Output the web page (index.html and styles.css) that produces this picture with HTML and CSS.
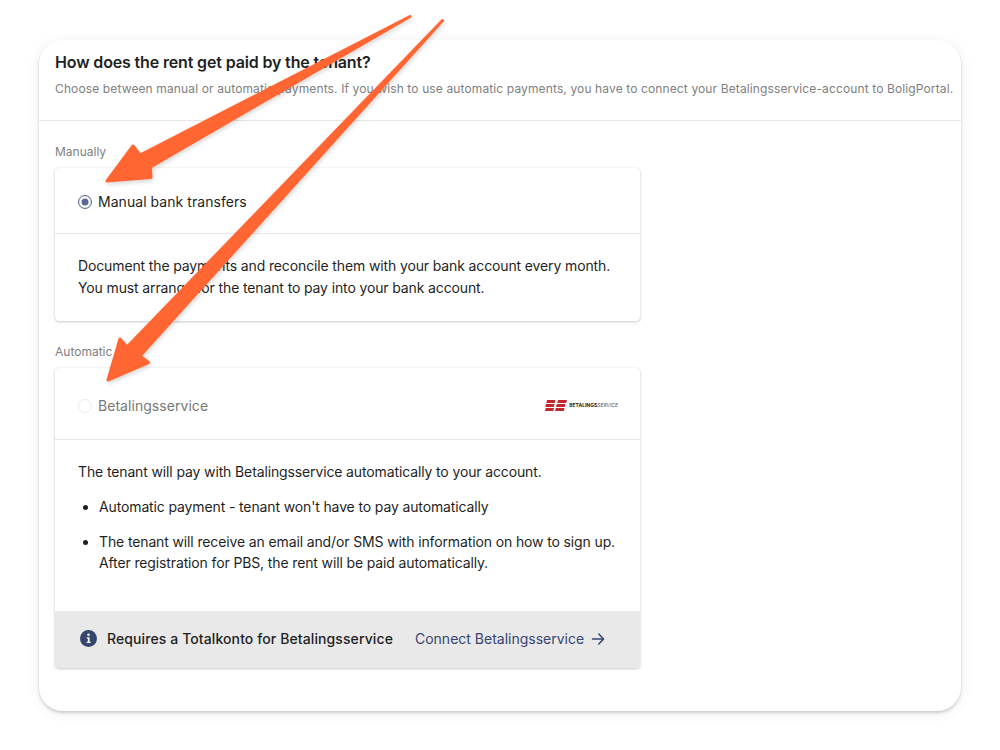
FILE: index.html
```html
<!DOCTYPE html>
<html lang="en">

<head>
  <meta charset="UTF-8">
  <title>Rent payment</title>
  <link rel="stylesheet" href="styles.css">
</head>

<body>
  <div class="panel">
    <div class="panel-head">
      <h1>How does the rent get paid by the tenant?</h1>
      <p>Choose between manual or automatic payments. If you wish to use automatic payments, you have to connect your Betalingsservice-account to BoligPortal.</p>
    </div>

    <div class="panel-body">
      <div class="group-label">Manually</div>
      <div class="option">
        <div class="option-head option-head-short">
          <span class="radio radio-on"></span>
          <span class="option-name">Manual bank transfers</span>
        </div>
        <div class="option-text option-text-short">
          <p>Document the payments and reconcile them with your bank account every month. You must arrange for the tenant to pay into your bank account.</p>
        </div>
      </div>

      <div class="group-label group-label-next">Automatic</div>
      <div class="option">
        <div class="option-head option-head-tall">
          <span class="radio radio-off"></span>
          <span class="option-name option-name-off">Betalingsservice</span>
          <span class="bs-logo">
            <svg width="22" height="11" viewBox="0 0 22 11">
              <path fill="#c1272d" d="M2 0h8.500l-.7 3H1.300zM1 4h8.500l-.7 3H.3zM.7 8h8.300l-.7 3H0zM13 0h9l-.7 3h-9zM11.800 4h8.700l-.7 3h-8.700zM10.800 8h8.700l-.7 3H10z"/>
            </svg>
            <span class="bs-word"><b>BETALINGS</b><i>SERVICE</i></span>
          </span>
        </div>
        <div class="option-text option-text-list">
          <p>The tenant will pay with Betalingsservice automatically to your account.</p>
          <ul>
            <li>Automatic payment - tenant won't have to pay automatically</li>
            <li>The tenant will receive an email and/or SMS with information on how to sign up. After registration for PBS, the rent will be paid automatically.</li>
          </ul>
        </div>
        <div class="option-foot">
          <svg class="info-icon" width="17" height="17" viewBox="0 0 16 16">
            <circle cx="8" cy="8" r="8" fill="#36456f"/>
            <circle cx="8" cy="4.400" r="1.200" fill="#fff"/>
            <path fill="#fff" d="M6.300 6.800h2.700v4.300h1v1.200H6.200v-1.200h1.200V8H6.300z"/>
          </svg>
          <span class="foot-note">Requires a Totalkonto for Betalingsservice</span>
          <a class="foot-link" href="#">Connect Betalingsservice
            <svg width="14" height="14" viewBox="0 0 14 14" fill="none" stroke="#36456f" stroke-width="1.500" stroke-linecap="round" stroke-linejoin="round">
              <path d="M1.500 7h11M7.800 2l4.800 5-4.800 5"/>
            </svg>
          </a>
        </div>
      </div>
    </div>
  </div>

  <!-- annotation arrows over the screenshot -->
  <svg class="arrows" width="1000" height="750" viewBox="0 0 1000 750">
    <defs>
      <filter id="arrow-shadow" x="-10%" y="-10%" width="120%" height="120%">
        <feDropShadow dx="1" dy="2" stdDeviation="2" flood-color="#000" flood-opacity="0.16"/>
      </filter>
    </defs>
    <g fill="#ff6633" stroke="#ff6633" stroke-width="3" stroke-linejoin="round" filter="url(#arrow-shadow)">
      <path d="M410 16.500 140 155 133 146 107 181 151 177.500 150.500 167Z"/>
      <path d="M442.500 20.500 127 347 120 339 108 380 148.500 362.500 140 356Z"/>
    </g>
  </svg>
</body>

</html>
```

FILE: styles.css
```css
* {
  box-sizing: border-box;
}

body {
  height: 750px;
  margin: 0;
  padding: 40px 39px 0;
  background: #fff;
  color: #1f1f1f;
  font-family: Inter, "Liberation Sans", sans-serif;
  overflow: hidden;
}

.panel {
  height: 671px;
  background: #fff;
  border-radius: 24px;
  box-shadow: 0 2px 3px rgba(0, 0, 0, 0.16), 0 2px 14px rgba(0, 0, 0, 0.07);
}

.panel-head {
  height: 81px;
  padding: 12px 16px 0;
  border-bottom: 1px solid #e6e6e6;
}

h1 {
  margin: 0 0 8px;
  font-size: 16px;
  line-height: 20px;
  font-weight: 600;
  letter-spacing: -0.15px;
}

.panel-head p {
  margin: 0;
  font-size: 12px;
  line-height: 18px;
  letter-spacing: 0.125px;
  color: #808080;
  white-space: nowrap;
}

.panel-body {
  padding: 22px 16px 0;
}

.group-label {
  margin-bottom: 7px;
  font-size: 12px;
  line-height: 18px;
  color: #808080;
}

.group-label-next {
  margin-top: 22px;
}

.option {
  width: 585px;
  background: #fff;
  border-radius: 4px;
  overflow: hidden;
  box-shadow: 0 1px 3px rgba(0, 0, 0, 0.2), 0 0 1px rgba(0, 0, 0, 0.14);
}

.option-head {
  display: flex;
  align-items: center;
  padding: 0 22px 0 23px;
  border-bottom: 1px solid #e6e6e6;
}

.option-head-short {
  height: 66px;
  padding-top: 3px;
}

.option-head-tall {
  height: 72px;
  padding-top: 5px;
}

.radio {
  width: 14px;
  height: 14px;
  margin-right: 6px;
  border-radius: 50%;
  background: #fff;
}

.radio-on {
  border: 1px solid #5a6a94;
  box-shadow: inset 0 0 0 2.500px #fff, inset 0 0 0 6px #5a6a94;
}

.radio-off {
  border: 1px solid #ececec;
}

.option-name {
  font-size: 14px;
  line-height: 20px;
  letter-spacing: 0.05px;
}

.option-name-off {
  color: #787878;
}

.bs-logo {
  display: flex;
  align-items: center;
  gap: 2px;
  margin-top: -2px;
  margin-left: auto;
}

.bs-word {
  font-size: 5px;
  line-height: 8px;
  color: #555;
  white-space: nowrap;
}

.bs-word b {
  color: #222;
}

.option-text {
  padding: 21px 22px 0 23px;
  font-size: 14px;
  line-height: 21px;
  letter-spacing: -0.13px;
}

.option-text p {
  margin: 0;
}

.option-text-short {
  height: 87px;
  line-height: 22px;
}

.option-text-list {
  height: 171px;
}

.option-text-list ul {
  margin: 14px 0 0;
  padding-left: 21px;
}

.option-text-list li + li {
  margin-top: 14px;
}

.option-foot {
  display: flex;
  align-items: center;
  height: 57px;
  padding: 0 32px 2px 25px;
  background: #e9e9e9;
  font-size: 14px;
}

.info-icon {
  flex: none;
  margin-right: 10px;
}

.foot-note {
  font-weight: 500;
  letter-spacing: 0.1px;
  white-space: nowrap;
}

.foot-link {
  display: flex;
  align-items: center;
  gap: 7px;
  margin-left: 22px;
  color: #36456f;
  text-decoration: none;
  white-space: nowrap;
}

.arrows {
  position: absolute;
  top: 0;
  left: 0;
  pointer-events: none;
}
```
